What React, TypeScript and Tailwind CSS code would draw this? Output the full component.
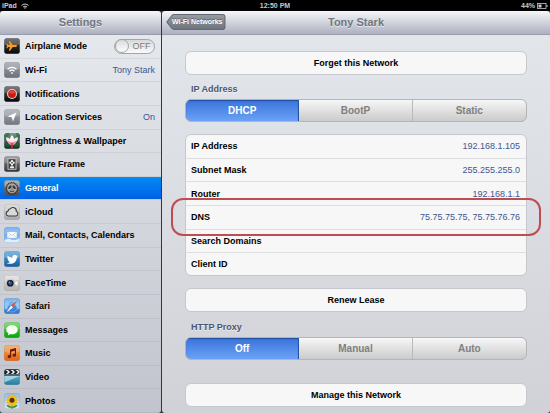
import { useState, type ReactNode } from 'react';

type TileProps = { id: string; from: string; to: string; gloss?: boolean; children: ReactNode };

function Tile({ id, from, to, gloss = true, children }: TileProps) {
  return (
    <svg viewBox="0 0 32 32" className="size-4 shrink-0" aria-hidden="true">
      <defs>
        <linearGradient id={id} x1="0" y1="0" x2="0" y2="1">
          <stop offset="0" stopColor={from} />
          <stop offset="1" stopColor={to} />
        </linearGradient>
        <clipPath id={id + '-clip'}>
          <rect x="0.5" y="0.5" width="31" height="31" rx="5" />
        </clipPath>
      </defs>
      <g clipPath={`url(#${id}-clip)`}>
        <rect width="32" height="32" fill={`url(#${id})`} />
        {gloss && <path d="M0 0h32v13Q16 19 0 13z" fill="#fff" opacity="0.22" />}
        {children}
      </g>
      <rect x="0.8" y="0.8" width="30.4" height="30.4" rx="5" fill="none" stroke="#333" strokeOpacity="0.22" />
    </svg>
  );
}

const icons = {
  airplane: (
    <Tile id="airplane" from="#4a4a4a" to="#080808">
      <path d="M26 16c0-1.400-2-2-4-2h-4.500L12 6.500h-2.500L12 14H8.500L6.500 11.500H4.800L6 16l-1.200 4.500h1.700l2-2.500H12L9.500 25.500H12L17.500 18H22c2 0 4-.6 4-2z" fill="#ff9a1f" />
    </Tile>
  ),
  wifi: (
    <Tile id="wifi" from="#9b9fa8" to="#6c717b">
      <g fill="none" stroke="#fff" strokeWidth="2.600">
        <path d="M7 14.500a13 13 0 0 1 18 0" />
        <path d="M11 18.500a7.500 7.500 0 0 1 10 0" />
      </g>
      <path d="M13.500 21.500a4 4 0 0 1 5 0L16 24.500z" fill="#fff" />
    </Tile>
  ),
  notifications: (
    <Tile id="notifications" from="#555" to="#050505">
      <circle cx="16" cy="16" r="10" fill="#d8d8d8" />
      <circle cx="16" cy="16" r="7.800" fill="#cf1714" />
      <path d="M9.500 14a6.700 6.700 0 0 1 13 0q-6.500 2-13 0z" fill="#e2453f" />
    </Tile>
  ),
  location: (
    <Tile id="location" from="#a6a9b2" to="#72767f">
      <path d="M25 7 18 25l-2.500-8.500L7 15z" fill="#fff" />
    </Tile>
  ),
  brightness: (
    <Tile id="brightness" from="#6f9c86" to="#12261c" gloss={false}>
      <path d="M0 0h12l-4 9-8 5zM24 0h8v12l-6-3z" fill="#3a7456" />
      <path d="M1 22q7-4 12 0v5H3zM20 22q6-4 11 0l-2 5h-9z" fill="#1d5a34" />
      <path d="M16 4c4 3 5 9 4 15h-8c-1-6 0-12 4-15z" fill="#fdf1f3" />
      <path d="M4 9c6-1 11 4 12 12-7 0-12-5-12-12zM28 9c-6-1-11 4-12 12 7 0 12-5 12-12z" fill="#f8e3e8" />
      <path d="M7 16q9 5 18 0-1 8-9 8t-9-8z" fill="#ee8fa5" />
      <path d="M13 19q3 2 6 0-1 5-3 5t-3-5z" fill="#d94b6b" />
      <path d="M14.500 23h3v9h-3z" fill="#c63748" />
    </Tile>
  ),
  frame: (
    <Tile id="frame" from="#8b8b8b" to="#343434">
      <rect x="8" y="5.500" width="16" height="21" fill="#3c3c3c" stroke="#c9c9c9" strokeWidth="1.800" />
      <g fill="#f2f2f2">
        <circle cx="16" cy="10.500" r="2.300" />
        <circle cx="12.800" cy="13.500" r="2.300" />
        <circle cx="19.200" cy="13.500" r="2.300" />
        <circle cx="16" cy="16.500" r="2.300" />
        <path d="M15.200 18h1.600v3h3.700l-1 3.500h-7l-1-3.500h3.700z" />
      </g>
      <circle cx="16" cy="13.500" r="1.600" fill="#444" />
    </Tile>
  ),
  general: (
    <Tile id="general" from="#a0a0a0" to="#4d4d4d">
      <circle cx="16" cy="17" r="11.500" fill="none" stroke="#303030" strokeWidth="3" strokeDasharray="2 1" />
      <circle cx="16" cy="17" r="9.500" fill="#a9a9a9" />
      <path d="M8.500 18a7.500 7.500 0 0 1 15 0l-4.500 1h-6z" fill="#353535" />
      <path d="M10 21h12q-2 3.500-6 3.500T10 21z" fill="#4b4b4b" />
      <path d="M16 17V8.500M16 17l-8.500 4M16 17l8.500 4" stroke="#b9b9b9" strokeWidth="2" />
      <circle cx="16" cy="18" r="2.800" fill="#777" stroke="#ccc" />
    </Tile>
  ),
  icloud: (
    <Tile id="icloud" from="#d5d5d5" to="#a9aaad">
      <path d="M9 24a5 5 0 0 1-1-9.800A5.500 5.500 0 0 1 13 9.500a6.500 6.500 0 0 1 11.500 5A5 5 0 0 1 24 24z" fill="#dadada" stroke="#3c3d40" strokeWidth="2.200" />
    </Tile>
  ),
  mail: (
    <Tile id="mail" from="#5c9ef0" to="#8ec6fa">
      <path d="M0 27q8-6 14-2t18-3v11H0z" fill="#dff0ff" />
      <rect x="6" y="9" width="20" height="13.500" rx="1" fill="#fbfbfb" stroke="#7da4cd" />
      <path d="m7 10 9 7.500 9-7.500M7 21.500l6-6M25 21.500l-6-6" fill="none" stroke="#a6bccf" strokeWidth="1.200" />
    </Tile>
  ),
  twitter: (
    <Tile id="twitter" from="#4fa3dd" to="#155d9f">
      <path d="M28 10c-.9.400-1.700.6-2.600.7.900-.5 1.600-1.400 1.900-2.400-.9.500-1.800.8-2.800 1A4.600 4.600 0 0 0 16.600 13.400c-3.700-.2-7-1.900-9.200-4.600-1.200 2.100-.6 4.600 1.400 6-.7 0-1.400-.2-2-.5 0 2.200 1.500 4 3.600 4.400-.7.200-1.300.2-2.100.1.600 1.800 2.200 3 4.200 3.100A9.200 9.200 0 0 1 5 23.800c9.200 5.200 20.700-.5 20.700-11.500.9-.6 1.700-1.400 2.300-2.300z" fill="#fff" />
    </Tile>
  ),
  facetime: (
    <Tile id="facetime" from="#e3e1dd" to="#b9b5af">
      <rect x="5" y="9" width="16" height="15" rx="3" fill="#b8babd" />
      <path d="m21 15 7-5v13l-7-5z" fill="#f8f8f8" stroke="#aaa" />
      <circle cx="12.500" cy="16.500" r="6.700" fill="#151d31" />
      <circle cx="12.500" cy="16.500" r="3.600" fill="#2b5796" />
      <circle cx="10.800" cy="14.500" r="1.300" fill="#a8ccf0" />
    </Tile>
  ),
  safari: (
    <Tile id="safari" from="#58a6f0" to="#2e78cc">
      <path d="M0 8q4-5 8-2t2 8-5 8-5-3zM20 4q8-1 12 6v11q-6 4-7-3t-6-5z" fill="#8cc3f5" />
      <circle cx="16" cy="17" r="11" fill="none" stroke="#b9dcfb" strokeWidth="2" strokeDasharray="1 1.600" />
      <path d="m27 4-9 15-4-4z" fill="#e65337" />
      <path d="m5 29 9-14 4 4z" fill="#f5f7fa" />
    </Tile>
  ),
  messages: (
    <Tile id="messages" from="#5fd550" to="#04a508">
      <path d="M16 6.500c6.600 0 11.500 3.900 11.500 9S22.600 24.500 16 24.500c-1.200 0-2.400-.1-3.500-.4Q10.500 26.500 7.500 26.500q1.600-1.700 1.300-3.900C6.200 21 4.500 18.400 4.500 15.500c0-5.100 4.900-9 11.500-9z" fill="#f7fff5" />
    </Tile>
  ),
  music: (
    <Tile id="music" from="#f5a04a" to="#e56310">
      <path d="m12 9 12-3v14.500a3.500 3 0 1 1-2.300-2.600v-6.600l-7.400 2V23a3.500 3 0 1 1-2.300-2.700z" fill="#701b0d" />
    </Tile>
  ),
  video: (
    <Tile id="video" from="#8fc6dc" to="#1f7ca4" gloss={false}>
      <path d="M0 0h32v11H0z" fill="#1f2326" />
      <path d="M3 2h5l4 4-4 4H4l4-4zM13 2h5l4 4-4 4h-4l4-4zM23 2h5l4 4-4 4h-4l4-4z" fill="#f2f2f2" />
      <path d="M0 11h32v3H0z" fill="#52666f" />
      <path d="M0 14h32L0 27z" fill="#d8f2f8" opacity="0.6" />
    </Tile>
  ),
  photos: (
    <Tile id="photos" from="#8fbdec" to="#dcebf7" gloss={false}>
      <path d="M15 22h2.500v10H15zM16 30q-10 0-11-6 8-1 11 6 3-7 11-6-1 6-11 6z" fill="#4b8c2a" />
      <g fill="#f7c61c" stroke="#dc9e10" strokeWidth="0.500">
        {[0, 30, 60, 90, 120, 150].map((angle) => (
          <ellipse key={angle} cx="16" cy="14.500" rx="3" ry="12" transform={`rotate(${angle} 16 14.500)`} />
        ))}
      </g>
      <circle cx="16" cy="14.500" r="5" fill="#54300f" />
    </Tile>
  ),
};

const items: { label: string; icon: keyof typeof icons; value?: string }[] = [
  { label: 'Wi-Fi', icon: 'wifi', value: 'Tony Stark' },
  { label: 'Notifications', icon: 'notifications' },
  { label: 'Location Services', icon: 'location', value: 'On' },
  { label: 'Brightness & Wallpaper', icon: 'brightness' },
  { label: 'Picture Frame', icon: 'frame' },
  { label: 'General', icon: 'general' },
  { label: 'iCloud', icon: 'icloud' },
  { label: 'Mail, Contacts, Calendars', icon: 'mail' },
  { label: 'Twitter', icon: 'twitter' },
  { label: 'FaceTime', icon: 'facetime' },
  { label: 'Safari', icon: 'safari' },
  { label: 'Messages', icon: 'messages' },
  { label: 'Music', icon: 'music' },
  { label: 'Video', icon: 'video' },
  { label: 'Photos', icon: 'photos' },
];

const network = [
  ['IP Address', '192.168.1.105'],
  ['Subnet Mask', '255.255.255.0'],
  ['Router', '192.168.1.1'],
  ['DNS', '75.75.75.75, 75.75.76.76'],
  ['Search Domains', ''],
  ['Client ID', ''],
];

function StatusBar() {
  return (
    <div className="grid h-[11px] shrink-0 grid-cols-3 items-center px-[2px] text-[7px] leading-[10px] font-bold text-[#c9c9c9]">
      <div className="flex items-center gap-1">
        <span>iPad</span>
        <svg viewBox="0 0 16 12" className="h-[6px] w-2" aria-label="Wi-Fi">
          <g fill="none" stroke="#c9c9c9" strokeWidth="2">
            <path d="M1 5a10 10 0 0 1 14 0" />
            <path d="M4 8a6 6 0 0 1 8 0" />
          </g>
          <path d="M6 9.500a3 3 0 0 1 4 0L8 12z" fill="#c9c9c9" />
        </svg>
      </div>
      <span className="text-center">12:50 PM</span>
      <div className="flex items-center justify-end gap-[2px]">
        <span>44%</span>
        <svg viewBox="0 0 22 12" className="h-[6px] w-[11px]" aria-label="Battery">
          <rect x="1" y="1" width="17" height="10" fill="none" stroke="#c9c9c9" strokeWidth="1.600" />
          <rect x="3" y="3" width="6" height="6" fill="#c9c9c9" />
          <path d="M19 4h2v4h-2z" fill="#c9c9c9" />
        </svg>
      </div>
    </div>
  );
}

function Bar({ title, children }: { title: string; children?: ReactNode }) {
  return (
    <header className="grid h-6 shrink-0 grid-cols-[1fr_auto_1fr] items-center rounded-t-[3px] border-b border-[#999caa] bg-linear-to-b from-[#f6f7f9] to-[#adb0c0] px-1 pb-px">
      <div className="flex">{children}</div>
      <h1 className="text-[11px] leading-4 font-bold text-[#70767f] [text-shadow:0_1px_0_#ffffff99]">{title}</h1>
    </header>
  );
}

function Sidebar() {
  const [airplane, setAirplane] = useState(false);
  const [current, setCurrent] = useState('General');
  return (
    <aside className="flex w-[161px] shrink-0 flex-col">
      <Bar title="Settings" />
      <ul className="flex flex-1 flex-col overflow-hidden rounded-b-[3px] bg-linear-to-b from-[#e5e8ec] to-[#c1c4cd] text-[9px] leading-3">
        <li className="flex flex-1 items-center gap-[5px] border-b border-[#0000000f] pr-[6px] pl-1">
          {icons.airplane}
          <label htmlFor="airplane-mode" className="flex-1 font-bold">Airplane Mode</label>
          <span className="relative flex h-[15px] w-[41px] items-center rounded-full border border-[#a3a5a8] bg-linear-to-b from-[#d9d9da] to-[#fafafa]">
            <input
              id="airplane-mode"
              type="checkbox"
              role="switch"
              checked={airplane}
              onChange={(e) => setAirplane(e.target.checked)}
              className="peer absolute inset-0 cursor-pointer appearance-none rounded-full"
            />
            <span className="pointer-events-none size-[14px] shrink-0 rounded-full border border-[#a3a5a8] bg-linear-to-b from-[#dcdcdc] to-[#fcfcfc] peer-checked:order-last" />
            <span className="pointer-events-none flex-1 text-center text-[#7c7c7c]">{airplane ? 'ON' : 'OFF'}</span>
          </span>
        </li>
        {items.map(({ label, icon, value }) => (
          <li key={label} className="flex flex-1 border-b border-[#0000000f]">
            <button
              type="button"
              aria-current={current === label ? 'page' : undefined}
              onClick={() => setCurrent(label)}
              className="flex flex-1 items-center gap-[5px] pr-[6px] pl-1 text-left font-bold whitespace-nowrap text-black aria-[current=page]:bg-linear-to-b aria-[current=page]:from-[#068af3] aria-[current=page]:to-[#0060e6] aria-[current=page]:text-white"
            >
              {icons[icon]}
              <span className="flex-1">{label}</span>
              {value && <span className="font-normal text-[#3d5692]">{value}</span>}
            </button>
          </li>
        ))}
      </ul>
    </aside>
  );
}

function Action({ children }: { children: ReactNode }) {
  return (
    <button type="button" className="h-6 w-full rounded-md border border-[#c6c8cd] bg-[#f7f7f7] text-center text-[9px] leading-3 font-bold text-black">
      {children}
    </button>
  );
}

function Segmented({ label, options }: { label: string; options: string[] }) {
  const [active, setActive] = useState(options[0]);
  return (
    <section className="flex flex-col gap-1">
      <h2 className="px-[6px] text-[9px] leading-3 font-bold text-[#4d576e] [text-shadow:0_1px_0_#ffffff99]">{label}</h2>
      <div role="group" aria-label={label} className="grid h-[23px] grid-cols-3 overflow-hidden rounded-md border border-[#b4b5b9] bg-[#b4b5b9]">
        {options.map((option) => (
          <button
            key={option}
            type="button"
            aria-pressed={active === option}
            onClick={() => setActive(option)}
            className="border-r border-[#b9b9b9] bg-linear-to-b from-[#f7f7f7] to-[#cbcbcb] text-[10px] leading-3 font-bold text-[#808080] last:border-r-0 aria-pressed:border-[#2455a8] aria-pressed:from-[#3973d9] aria-pressed:to-[#6ba2f7] aria-pressed:text-white aria-pressed:shadow-[inset_0_1px_1px_#1f4c9d]"
          >
            {option}
          </button>
        ))}
      </div>
    </section>
  );
}

function Details() {
  return (
    <main className="flex min-w-0 flex-1 flex-col">
      <Bar title="Tony Stark">
        <button type="button" className="relative flex h-4 items-center" aria-label="Wi-Fi Networks">
          <svg viewBox="0 0 58 16" preserveAspectRatio="none" className="absolute inset-0 size-full" aria-hidden="true">
            <defs>
              <linearGradient id="back" x1="0" y1="0" x2="0" y2="1">
                <stop offset="0" stopColor="#989ca3" />
                <stop offset="1" stopColor="#6d737c" />
              </linearGradient>
            </defs>
            <path d="M.8 8 5.500 1.800Q6.500.5 8 .5h47q2.500 0 2.500 2.500v10q0 2.500-2.500 2.500H8q-1.500 0-2.500-1.300z" fill="url(#back)" stroke="#646a73" />
          </svg>
          <span className="relative pr-[3px] pl-[6px] text-[7px] leading-3 font-bold whitespace-nowrap text-white [text-shadow:0_-1px_0_#00000055]">Wi-Fi Networks</span>
        </button>
      </Bar>
      <div className="flex flex-1 flex-col rounded-b-[3px] bg-linear-to-b from-[#e2e6eb] to-[#d1d2d8] px-[23px] pt-4 pb-[6px]">
        <Action>Forget this Network</Action>
        <div className="mt-2">
          <Segmented label="IP Address" options={['DHCP', 'BootP', 'Static']} />
        </div>
        <table className="mt-3 mb-3 h-[142px] w-full border-separate border-spacing-0 rounded-md border border-[#c6c8cd] bg-[#f7f7f7] text-[9px] leading-3">
          <tbody>
            {network.map(([name, value]) => (
              <tr key={name} className="group relative">
                <th scope="row" className="border-b border-[#dfdfdf] p-0 pl-[5px] text-left font-bold text-black group-last:border-b-0">{name}</th>
                <td className="border-b border-[#dfdfdf] p-0 pr-[6px] text-right text-[#3d5692] group-last:border-b-0">
                  {value}
                  {name === 'DNS' && (
                    <span className="pointer-events-none absolute -inset-x-[15px] -top-2 -bottom-[6px] rounded-xl border-2 border-[#bd4d50]" />
                  )}
                </td>
              </tr>
            ))}
          </tbody>
        </table>
        <Action>Renew Lease</Action>
        <div className="mt-[9px] mb-[23px]">
          <Segmented label="HTTP Proxy" options={['Off', 'Manual', 'Auto']} />
        </div>
        <Action>Manage this Network</Action>
      </div>
    </main>
  );
}

export default function App() {
  return (
    <div className="flex min-h-screen flex-col bg-black font-['Liberation_Sans',Arial,sans-serif]">
      <StatusBar />
      <div className="flex flex-1 gap-px bg-[#33363b]">
        <Sidebar />
        <Details />
      </div>
    </div>
  );
}
